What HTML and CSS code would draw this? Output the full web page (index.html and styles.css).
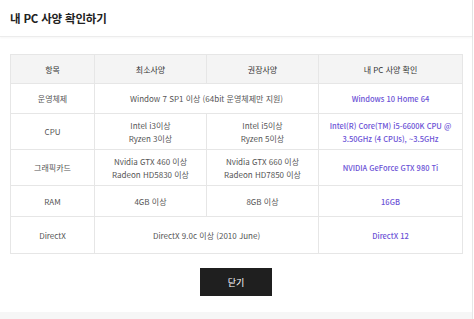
FILE: index.html
```html
<!DOCTYPE html>
<html lang="ko">
<head>
<meta charset="utf-8">
<link rel="stylesheet" href="styles.css">
</head>
<body>
<div class="modal">
  <div class="head"><h1 class="title">내 PC 사양 확인하기</h1></div>
  <div class="content">
    <table class="spec">
      <colgroup>
        <col class="c1"><col class="c2"><col class="c3"><col class="c4">
      </colgroup>
      <thead>
        <tr><th>항목</th><th>최소사양</th><th>권장사양</th><th>내 PC 사양 확인</th></tr>
      </thead>
      <tbody>
        <tr class="r1"><td>운영체제</td><td colspan="2">Window 7 SP1 이상 (64bit 운영체제만 지원)</td><td class="mine">Windows 10 Home 64</td></tr>
        <tr class="r2"><td>CPU</td><td>Intel i3이상<br>Ryzen 3이상</td><td>Intel i5이상<br>Ryzen 5이상</td><td class="mine">Intel(R) Core(TM) i5-6600K CPU @<br>3.50GHz (4 CPUs), ~3.5GHz</td></tr>
        <tr class="r2"><td>그래픽카드</td><td>Nvidia GTX 460 이상<br>Radeon HD5830 이상</td><td>Nvidia GTX 660 이상<br>Radeon HD7850 이상</td><td class="mine">NVIDIA GeForce GTX 980 Ti</td></tr>
        <tr class="r3"><td>RAM</td><td>4GB 이상</td><td>8GB 이상</td><td class="mine">16GB</td></tr>
        <tr class="r4"><td>DirectX</td><td colspan="2">DirectX 9.0c 이상 (2010 June)</td><td class="mine">DirectX 12</td></tr>
      </tbody>
    </table>
    <div class="actions"><button class="close">닫기</button></div>
  </div>
  <div class="foot"></div>
</div>
</body>
</html>
```
FILE: styles.css
```css
html, body { margin: 0; padding: 0; background: #fff; }
body {
  font-family: "Noto Sans CJK KR", "Noto Sans", sans-serif;
  width: 474px; height: 319px; overflow: hidden;
}
.modal {
  width: 472px;
  height: 319px;
  border-right: 1px solid #e6e6e6;
  display: flex;
  flex-direction: column;
}
.head {
  height: 36px;
  border-bottom: 1px solid #ececec;
  box-shadow: 0 1px 2px rgba(0,0,0,0.04);
  display: flex;
  align-items: center;
  padding-left: 10px;
}
.title {
  margin: 0;
  font-size: 11.5px;
  font-weight: 700;
  color: #222;
  letter-spacing: -0.2px;
}
.content { flex: 1; padding: 17px 10px 0 10px; }
.spec {
  width: 452px;
  border-collapse: collapse;
  table-layout: fixed;
  border: 1px solid #e4e4e4;
  font-size: 8px;
  color: #555;
}
.c1 { width: 84px; } .c2 { width: 112px; } .c3 { width: 112px; } .c4 { width: 144px; }
.spec th {
  background: #f4f4f4;
  height: 28px;
  font-weight: 400;
  color: #333;
  font-size: 8px;
  border: 1px solid #e6e6e6;
  padding: 0;
}
.spec td {
  text-align: center;
  border: 1px solid #e6e6e6;
  padding: 0 4px;
  line-height: 13px;
}
.r1 td { height: 29px; }
.r2 td { height: 35px; }
.r3 td { height: 30px; }
.r4 td { height: 36px; }
.spec td.mine { color: #6b52d6; font-weight: 500; font-size: 7.5px; }
.actions { display: flex; justify-content: center; padding-top: 14px; }
.close {
  width: 72px; height: 28px;
  background: #1f1f1f; color: #fff;
  border: none;
  font-family: inherit; font-size: 9px;
}
.foot { height: 7px; background: #f6f6f6; }
```
